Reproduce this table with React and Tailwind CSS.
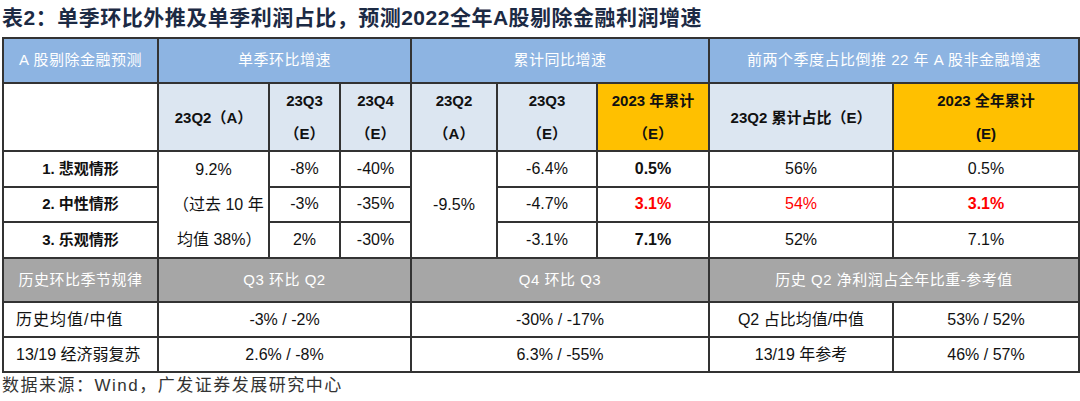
const font = { fontFamily: '"Liberation Sans", "Noto Sans CJK SC", sans-serif' };

const cell = "border-2 border-[#333] text-center align-middle";
const blueHead = `${cell} bg-[#8db4e2] text-white text-[15px] tracking-[0.5px]`;
const subHead = `${cell} bg-[#dce6f1] font-bold text-[15px] leading-[33px]`;
const orangeHead = `${cell} bg-[#ffc000] font-bold text-[15px] leading-[33px]`;
const grayHead = `${cell} bg-[#a6a6a6] text-white text-[15px] tracking-[0.5px]`;
const body = `${cell} text-[16px] text-[#111]`;

const scenarios = [
  { name: "1. 悲观情形", q3: "-8%", q4: "-40%", c3: "-6.4%", c4: "0.5%", share: "56%", full: "0.5%" },
  { name: "2. 中性情形", q3: "-3%", q4: "-35%", c3: "-4.7%", c4: "3.1%", share: "54%", full: "3.1%", red: true },
  { name: "3. 乐观情形", q3: "2%", q4: "-30%", c3: "-3.1%", c4: "7.1%", share: "52%", full: "7.1%" },
];

export default function App() {
  return (
    <div className="w-[1080px] h-[401px] bg-white text-[#111] overflow-hidden" style={font}>
      <h1 className="h-[37px] pl-[2px] pt-[4px] text-[21px] font-bold leading-[28px] tracking-[0.5px] text-[#1c2a44]">
        表2：单季环比外推及单季利润占比，预测2022全年A股剔除金融利润增速
      </h1>
      <table className="ml-[2px] w-[1076px] table-fixed border-collapse">
        <colgroup>
          <col className="w-[155px]" />
          <col className="w-[111px]" />
          <col className="w-[71px]" />
          <col className="w-[71px]" />
          <col className="w-[86px]" />
          <col className="w-[100px]" />
          <col className="w-[112px]" />
          <col className="w-[184px]" />
          <col className="w-[186px]" />
        </colgroup>
        <tbody>
          <tr className="h-[45px]">
            <td className={blueHead}>A 股剔除金融预测</td>
            <td className={blueHead} colSpan={3}>单季环比增速</td>
            <td className={blueHead} colSpan={3}>累计同比增速</td>
            <td className={blueHead} colSpan={2}>前两个季度占比倒推 22 年 A 股非金融增速</td>
          </tr>
          <tr className="h-[68px]">
            <td className={`${cell} bg-white`}></td>
            <td className={subHead}>23Q2（A）</td>
            <td className={subHead}>23Q3<br />（E）</td>
            <td className={subHead}>23Q4<br />（E）</td>
            <td className={subHead}>23Q2<br />（A）</td>
            <td className={subHead}>23Q3<br />（E）</td>
            <td className={orangeHead}>2023 年累计<br />（E）</td>
            <td className={subHead}>23Q2 累计占比（E）</td>
            <td className={orangeHead}>2023 全年累计<br />(E)</td>
          </tr>
          {scenarios.map((s, i) => (
            <tr key={s.name} className="h-[35px]">
              <td className={`${cell} font-bold text-[15px]`}>{s.name}</td>
              {i === 0 && (
                <td className={`${body} leading-[35px]`} rowSpan={3}>
                  <div className="text-center">9.2%</div>
                  <div className="pl-[14px] text-left">（过去 10 年</div>
                  <div className="pl-[18px] text-left">均值 38%）</div>
                </td>
              )}
              <td className={body}>{s.q3}</td>
              <td className={body}>{s.q4}</td>
              {i === 0 && (
                <td className={body} rowSpan={3}>-9.5%</td>
              )}
              <td className={body}>{s.c3}</td>
              <td className={`${body} font-bold ${s.red ? "text-[#ff0000]" : ""}`}>{s.c4}</td>
              <td className={`${body} ${s.red ? "text-[#ff0000]" : ""}`}>{s.share}</td>
              <td className={`${body} ${s.red ? "font-bold text-[#ff0000]" : ""}`}>{s.full}</td>
            </tr>
          ))}
          <tr className="h-[44px]">
            <td className={grayHead}>历史环比季节规律</td>
            <td className={grayHead} colSpan={3}>Q3 环比 Q2</td>
            <td className={grayHead} colSpan={3}>Q4 环比 Q3</td>
            <td className={grayHead} colSpan={2}>历史 Q2 净利润占全年比重-参考值</td>
          </tr>
          <tr className="h-[35px]">
            <td className={`${body} text-left pl-[12px] text-[15px] tracking-[1px]`}>历史均值/中值</td>
            <td className={body} colSpan={3}>-3% / -2%</td>
            <td className={body} colSpan={3}>-30% / -17%</td>
            <td className={`${body} text-[15px]`}>Q2 占比均值/中值</td>
            <td className={body}>53% / 52%</td>
          </tr>
          <tr className="h-[35px]">
            <td className={`${body} text-left pl-[12px] text-[15px]`}>13/19 经济弱复苏</td>
            <td className={body} colSpan={3}>2.6% / -8%</td>
            <td className={body} colSpan={3}>6.3% / -55%</td>
            <td className={`${body} text-[15px]`}>13/19 年参考</td>
            <td className={body}>46% / 57%</td>
          </tr>
        </tbody>
      </table>
      <p className="mt-[2px] pl-[2px] text-[17px] leading-[22px] tracking-[1.5px] text-[#333]">数据来源：Wind，广发证券发展研究中心</p>
    </div>
  );
}
